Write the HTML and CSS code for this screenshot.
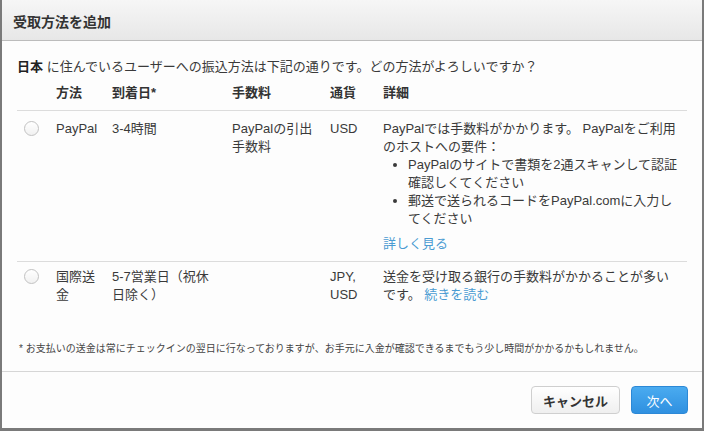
FILE: index.html
```html
<!DOCTYPE html>
<html lang="ja">
<head>
    <meta charset="UTF-8">
    <title>受取方法を追加</title>
    <link rel="stylesheet" href="styles.css">
</head>
<body>
    <div class="dialog">
        <div class="dialog-head">受取方法を追加</div>
        <div class="dialog-body">
            <p class="intro"><b>日本</b> に住んでいるユーザーへの振込方法は下記の通りです。どの方法がよろしいですか？</p>
            <table class="methods">
                <colgroup>
                    <col class="c-radio">
                    <col class="c-name">
                    <col class="c-days">
                    <col class="c-fee">
                    <col class="c-cur">
                    <col class="c-info">
                </colgroup>
                <thead>
                    <tr>
                        <th></th>
                        <th>方法</th>
                        <th>到着日*</th>
                        <th>手数料</th>
                        <th>通貨</th>
                        <th>詳細</th>
                    </tr>
                </thead>
                <tbody>
                    <tr class="row-paypal">
                        <td><span class="radio"></span></td>
                        <td>PayPal</td>
                        <td>3-4時間</td>
                        <td>PayPalの引出手数料</td>
                        <td>USD</td>
                        <td>
                            PayPalでは手数料がかかります。 PayPalをご利用のホストへの要件：
                            <ul>
                                <li>PayPalのサイトで書類を2通スキャンして認証確認しくてください</li>
                                <li>郵送で送られるコードをPayPal.comに入力してください</li>
                            </ul>
                            <a class="more" href="#">詳しく見る</a>
                        </td>
                    </tr>
                    <tr class="row-wire">
                        <td><span class="radio"></span></td>
                        <td>国際送金</td>
                        <td>5-7営業日（祝休日除く）</td>
                        <td></td>
                        <td>JPY, USD</td>
                        <td>送金を受け取る銀行の手数料がかかることが多いです。 <a href="#">続きを読む</a></td>
                    </tr>
                </tbody>
            </table>
            <p class="note">* お支払いの送金は常にチェックインの翌日に行なっておりますが、お手元に入金が確認できるまでもう少し時間がかかるかもしれません。</p>
        </div>
        <div class="dialog-foot">
            <button class="btn">キャンセル</button>
            <button class="btn btn-primary">次へ</button>
        </div>
    </div>
</body>
</html>
```

FILE: styles.css
```css
html, body {
    margin: 0;
    padding: 0;
    height: 100%;
}

body {
    background: #7a7a7a;
    font-family: "Liberation Sans", "Noto Sans CJK JP", sans-serif;
    color: #3a3a3a;
    font-size: 13px;
}

.dialog {
    height: 428px;
    margin: 0 2px;
    background: #fdfdfd;
    display: flex;
    flex-direction: column;
}

.dialog-head {
    height: 41px;
    box-sizing: border-box;
    padding: 11px 11px 0;
    border-bottom: 1px solid #bcbcbc;
    background: linear-gradient(#f6f6f6, #e7e7e7);
    font-size: 14px;
    font-weight: bold;
    color: #333;
}

.dialog-body {
    flex: 1;
    padding: 17px 16px 0 15px;
    border-bottom: 1px solid #d6d6d6;
}

.intro {
    margin: 0 0 8px;
    line-height: 18px;
}

.intro b {
    color: #222;
}

.methods {
    width: 670px;
    table-layout: fixed;
    border-collapse: collapse;
    line-height: 18px;
}

.c-radio { width: 39px; }
.c-name { width: 56px; }
.c-days { width: 120px; }
.c-fee { width: 98px; }
.c-cur { width: 53px; }
.c-info { width: 304px; }

.methods th {
    text-align: left;
    font-weight: bold;
    color: #333;
    padding: 0 0 8px;
}

.methods td {
    vertical-align: top;
    padding: 9px 12px 8px 0;
    border-top: 1px solid #dcdcdc;
}

.row-wire td {
    padding-top: 6px;
}

.methods td:last-child {
    padding-right: 8px;
}

.methods td:nth-child(3) {
    padding-right: 15px;
}

.radio {
    display: block;
    width: 13px;
    height: 13px;
    margin: 1px 0 0 7px;
    border: 1px solid #c2c2c2;
    border-radius: 50%;
    background: linear-gradient(#fff, #f1f1f1);
}

.methods ul {
    margin: 0;
    padding-left: 25px;
}

.methods a {
    color: #4a9bd2;
    text-decoration: none;
}

.more {
    display: inline-block;
    margin-top: 7px;
}

.note {
    margin: 28px 0 0 2px;
    font-size: 10px;
    color: #444;
}

.dialog-foot {
    height: 56px;
    box-sizing: border-box;
    padding: 14px 14px 0;
    display: flex;
    justify-content: flex-end;
    gap: 11px;
}

.btn {
    height: 28px;
    padding: 0 11px;
    border: 1px solid #cfcfcf;
    border-radius: 4px;
    background: linear-gradient(#fff, #efefef);
    font-family: inherit;
    font-size: 13px;
    font-weight: bold;
    color: #333;
}

.btn-primary {
    width: 57px;
    padding: 0;
    border-color: #2c88d6;
    background: linear-gradient(#4aabf0, #2f90e0);
    font-weight: normal;
    color: #fff;
}
```
